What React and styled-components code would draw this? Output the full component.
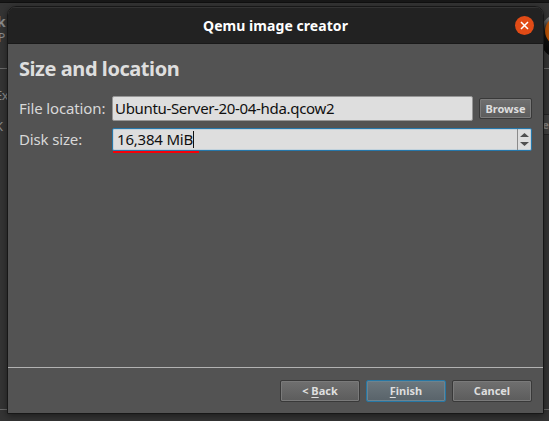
import React from 'react';
import styled, { createGlobalStyle } from 'styled-components';

const GlobalStyle = createGlobalStyle`
  * { box-sizing: border-box; }
  body { margin: 0; background: #303030; overflow: hidden; }
`;

const Desktop = styled.main`
  position: relative;
  width: 549px;
  height: 421px;
  padding: 6px 5px 7px 7px;
  overflow: hidden;
  background: linear-gradient(#181818 0 2px, #101010 2px 3px, #343434 3px);
  font-family: "Noto Sans", "Open Sans", sans-serif;
`;

const Rule = styled.div`
  position: absolute;
  left: 0;
  right: 0;
  top: ${(p) => p.$top}px;
  height: 1px;
  background: #6a6a6a;
`;

const Fragment = styled.span`
  position: absolute;
  left: ${(p) => p.$left}px;
  top: ${(p) => p.$top}px;
  font-size: ${(p) => p.$size}px;
  font-weight: ${(p) => (p.$bold ? 700 : 400)};
  line-height: 16px;
  letter-spacing: -0.5px;
  color: ${(p) => p.$color || '#8c8c8c'};
`;

const RearLogo = styled.svg`
  position: absolute;
  left: 541px;
  top: 12px;
`;

const RearButton = styled.div`
  position: absolute;
  left: 530px;
  top: 114px;
  width: 30px;
  height: 21px;
  border: 1px solid #252525;
  background: #404040;
`;

const Window = styled.section`
  display: flex;
  flex-direction: column;
  width: 537px;
  height: 408px;
  border: 1px solid #171717;
  border-radius: 9px 9px 0 0;
  overflow: hidden;
  background: #535353;
`;

const WindowShadow = styled.div`
  position: relative;
  border-radius: 9px 9px 0 0;
  box-shadow: 0 2px 7px rgba(0, 0, 0, 0.45);
`;

const TitleBar = styled.header`
  display: grid;
  grid-template-columns: 28px 1fr 28px;
  align-items: center;
  flex: 0 0 37px;
  border-top: 1px solid #343434;
  border-bottom: 1px solid #191919;
  background: #222222;
`;

const Title = styled.h1`
  grid-column: 2;
  margin: 0;
  text-align: center;
  font-size: 14px;
  line-height: 20px;
  font-weight: 700;
  letter-spacing: 0.06px;
  color: #fff;
`;

const CloseButton = styled.button`
  display: block;
  width: 19px;
  height: 19px;
  margin: 0 0 1px 0;
  padding: 0;
  border: 0;
  border-radius: 50%;
  background: #e14b16;
  svg { display: block; }
`;

const Body = styled.div`
  display: flex;
  flex: 1;
  flex-direction: column;
`;

const Heading = styled.h2`
  margin: 13px 0 0 11px;
  font-size: 20px;
  line-height: 24px;
  font-weight: 700;
  letter-spacing: -0.44px;
  color: #dedede;
`;

const Form = styled.div`
  display: grid;
  grid-template-columns: 86px 1fr;
  grid-template-rows: 25px 23px;
  gap: 7px;
  margin: 15px 11px 0 11px;
`;

const Label = styled.label`
  font-size: 15px;
  line-height: ${(p) => p.$line}px;
  letter-spacing: ${(p) => p.$track}px;
  white-space: nowrap;
  color: #d8d8d8;
`;

const FileRow = styled.div`
  display: grid;
  grid-template-columns: 361px 53px;
  gap: 6px;
  align-items: center;
`;

const TextField = styled.div`
  height: 25px;
  padding-left: 2px;
  border: 1px solid #969696;
  border-radius: 2px;
  background: #dedede;
  font-size: 15px;
  line-height: 23px;
  letter-spacing: -0.33px;
  color: #101010;
`;

const SpinBox = styled.div`
  position: relative;
  display: flex;
  height: 23px;
  border: 1px solid #2677aa;
  border-radius: 2px;
  background: #dedede;
  box-shadow: inset 0 0 0 1px #c2d2dc;
`;

const Value = styled.span`
  align-self: center;
  height: 17px;
  margin-left: 4px;
  border-right: 1px solid #111;
  font-size: 15px;
  line-height: 17px;
  letter-spacing: -0.2px;
  color: #101010;
`;

const Stepper = styled.div`
  display: flex;
  width: 14px;
  margin-left: auto;
  align-items: center;
  justify-content: center;
  border-left: 1px solid #8b8b8b;
`;

const RedMark = styled.div`
  position: absolute;
  left: 0;
  top: 22px;
  width: 86px;
  height: 2px;
  background: #f40008;
`;

const Button = styled.button`
  width: ${(p) => p.$width}px;
  height: ${(p) => p.$height}px;
  padding: 0;
  border: 1px solid ${(p) => (p.$primary ? '#2677a4' : '#393939')};
  border-radius: 2px;
  background: ${(p) => (p.$primary ? 'linear-gradient(#6c777d, #59636a)' : 'linear-gradient(#707070, #5c5c5c)')};
  box-shadow: inset 0 0 0 1px ${(p) => (p.$primary ? '#6c838f' : '#7a7a7a')};
  font-family: inherit;
  font-size: 11px;
  font-weight: 700;
  line-height: 16px;
  color: #dedede;
`;

const Mnemonic = styled.span`
  text-decoration: underline;
  text-decoration-thickness: 1px;
  text-underline-offset: 2px;
`;

const Footer = styled.footer`
  display: flex;
  justify-content: flex-end;
  gap: 6px;
  height: 46px;
  margin-top: auto;
  padding: 12px 11px 0 0;
  border-top: 1px solid #b2b2b2;
`;

export default function App() {
  return (
    <Desktop>
      <GlobalStyle />
      <Rule $top={68} />
      <Rule $top={409} />
      <Fragment $left={-3} $top={14} $size={14} $bold>k</Fragment>
      <Fragment $left={-2} $top={30} $size={12}>P</Fragment>
      <Fragment $left={-5} $top={87} $size={13}>Ex</Fragment>
      <Fragment $left={-5} $top={118} $size={13}>K</Fragment>
      <RearLogo width="34" height="48" viewBox="0 0 34 48">
        <defs>
          <linearGradient id="rim" x1="0" y1="0" x2="0" y2="1">
            <stop offset="0" stopColor="#a0a0a0" />
            <stop offset="0.4" stopColor="#141414" />
            <stop offset="1" stopColor="#050505" />
          </linearGradient>
        </defs>
        <circle cx="21" cy="24" r="23" fill="url(#rim)" />
        <ellipse cx="21" cy="19" rx="17" ry="16" fill="#b95306" />
      </RearLogo>
      <RearButton />
      <Fragment $left={538} $top={117} $size={11} $bold $color="#858585">re</Fragment>
      <WindowShadow>
        <Window>
          <TitleBar>
            <Title>Qemu image creator</Title>
            <CloseButton aria-label="Close">
              <svg width="19" height="19" viewBox="0 0 19 19">
                <path d="M6 6l7 7M13 6l-7 7" stroke="#fff" strokeWidth="1.5" />
              </svg>
            </CloseButton>
          </TitleBar>
          <Body>
            <Heading>Size and location</Heading>
            <Form>
              <Label $track={-0.13} $line={24}>File location:</Label>
              <FileRow>
                <TextField>Ubuntu-Server-20-04-hda.qcow2</TextField>
                <Button $width={53} $height={21}>Browse</Button>
              </FileRow>
              <Label $track={-0.15} $line={22}>Disk size:</Label>
              <SpinBox>
                <Value>16,384 MiB</Value>
                <Stepper>
                  <svg width="11" height="15" viewBox="0 0 11 15">
                    <path d="M1 5L5.5 1L10 5ZM1 10L5.5 14L10 10Z" fill="#505050" />
                  </svg>
                </Stepper>
                <RedMark />
              </SpinBox>
            </Form>
            <Footer>
              <Button $width={80} $height={22}>&lt; <Mnemonic>B</Mnemonic>ack</Button>
              <Button $width={80} $height={22} $primary><Mnemonic>F</Mnemonic>inish</Button>
              <Button $width={80} $height={22}>Cancel</Button>
            </Footer>
          </Body>
        </Window>
      </WindowShadow>
    </Desktop>
  );
}
